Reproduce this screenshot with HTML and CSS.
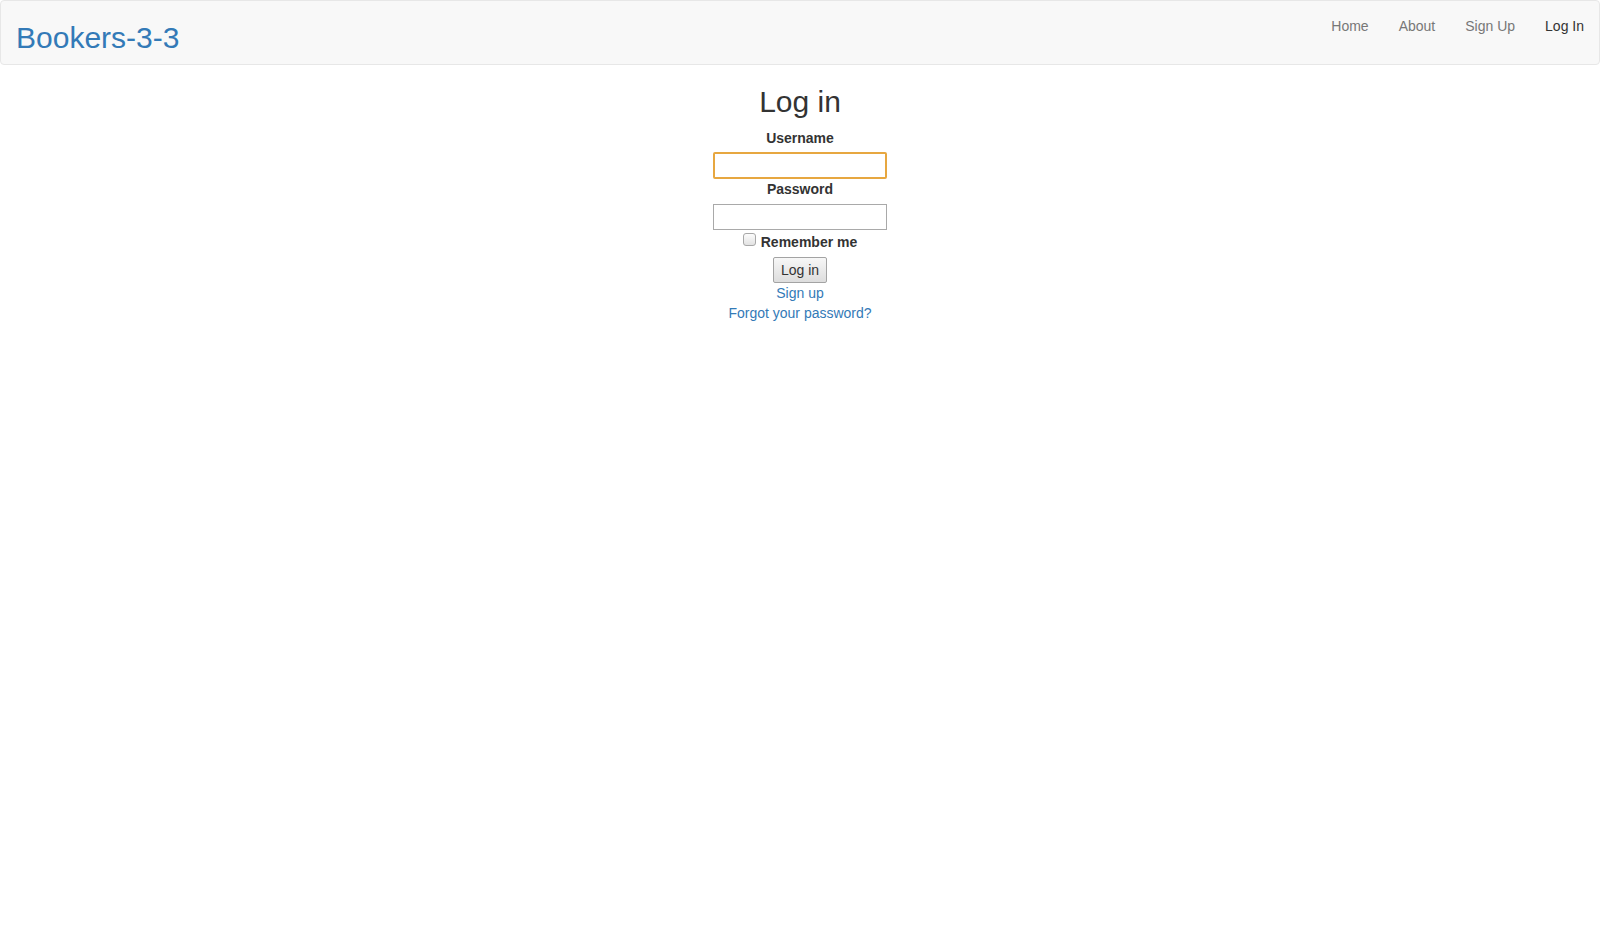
FILE: index.html
```html
<!DOCTYPE html>
<html lang="en">
<head>
<meta charset="utf-8">
<title>Bookers-3-3</title>
<link rel="stylesheet" href="styles.css">
</head>
<body>
<nav class="navbar">
  <a class="brand" href="#">Bookers-3-3</a>
  <ul class="nav">
    <li><a href="#">Home</a></li>
    <li><a href="#">About</a></li>
    <li><a href="#">Sign Up</a></li>
    <li><a class="active" href="#">Log In</a></li>
  </ul>
</nav>
<main class="content">
  <h2 class="title">Log in</h2>
  <form class="login-form">
    <label class="field-label" for="username">Username</label>
    <input class="text-input focused" id="username" type="text">
    <label class="field-label" for="password">Password</label>
    <input class="text-input" id="password" type="password">
    <div class="remember">
      <span class="checkbox"></span>
      <span class="remember-label">Remember me</span>
    </div>
    <button class="submit" type="button">Log in</button>
  </form>
  <a class="link" href="#">Sign up</a>
  <a class="link" href="#">Forgot your password?</a>
</main>
</body>
</html>
```
FILE: styles.css
```css
html, body {
  margin: 0;
  padding: 0;
  background: #fff;
}
body {
  font-family: "Liberation Sans", Arial, sans-serif;
  font-size: 14px;
  line-height: 20px;
  color: #333;
}
.navbar {
  box-sizing: border-box;
  height: 65px;
  border: 1px solid #e7e7e7;
  border-radius: 4px;
  background: #f8f8f8;
  display: flex;
  justify-content: space-between;
  align-items: flex-start;
  padding: 0 0 0 15px;
}
.brand {
  font-size: 30px;
  line-height: 33px;
  padding-top: 20px;
  color: #337ab7;
  text-decoration: none;
}
.nav {
  list-style: none;
  margin: 0;
  padding: 0;
  display: flex;
}
.nav a {
  display: block;
  padding: 15px 15px;
  line-height: 20px;
  color: #777;
  text-decoration: none;
}
.nav a.active {
  color: #333;
}
.content {
  display: flex;
  flex-direction: column;
  align-items: center;
}
.title {
  font-size: 30px;
  line-height: 33px;
  font-weight: 500;
  margin: 20px 0 10px;
}
.login-form {
  display: flex;
  flex-direction: column;
  align-items: center;
}
.field-label {
  font-weight: bold;
  line-height: 20px;
}
.text-input {
  box-sizing: border-box;
  width: 174px;
  height: 26px;
  margin-top: 5px;
  border: 1px solid #a9a9a9;
  padding: 1px 2px;
  font: inherit;
  background: #fff;
}
.text-input.focused {
  border: 2px solid #e7a740;
  border-radius: 2px;
  height: 27px;
  margin-top: 4px;
}
.remember {
  display: flex;
  align-items: flex-start;
  gap: 5px;
  margin-top: 2px;
  height: 20px;
}
.checkbox {
  box-sizing: border-box;
  width: 13px;
  height: 13px;
  margin-top: 1px;
  border: 1px solid #a8a8a8;
  border-radius: 3px;
  background: linear-gradient(#fcfcfc, #e2e2e2);
}
.remember-label {
  font-weight: bold;
}
.submit {
  box-sizing: border-box;
  width: 54px;
  height: 26px;
  margin-top: 5px;
  padding: 0;
  border: 1px solid #a3a3a3;
  border-radius: 2px;
  background: linear-gradient(#f7f7f7, #dddddd);
  font: inherit;
  color: #333;
}
.link {
  color: #337ab7;
  text-decoration: none;
  line-height: 20px;
}
```
